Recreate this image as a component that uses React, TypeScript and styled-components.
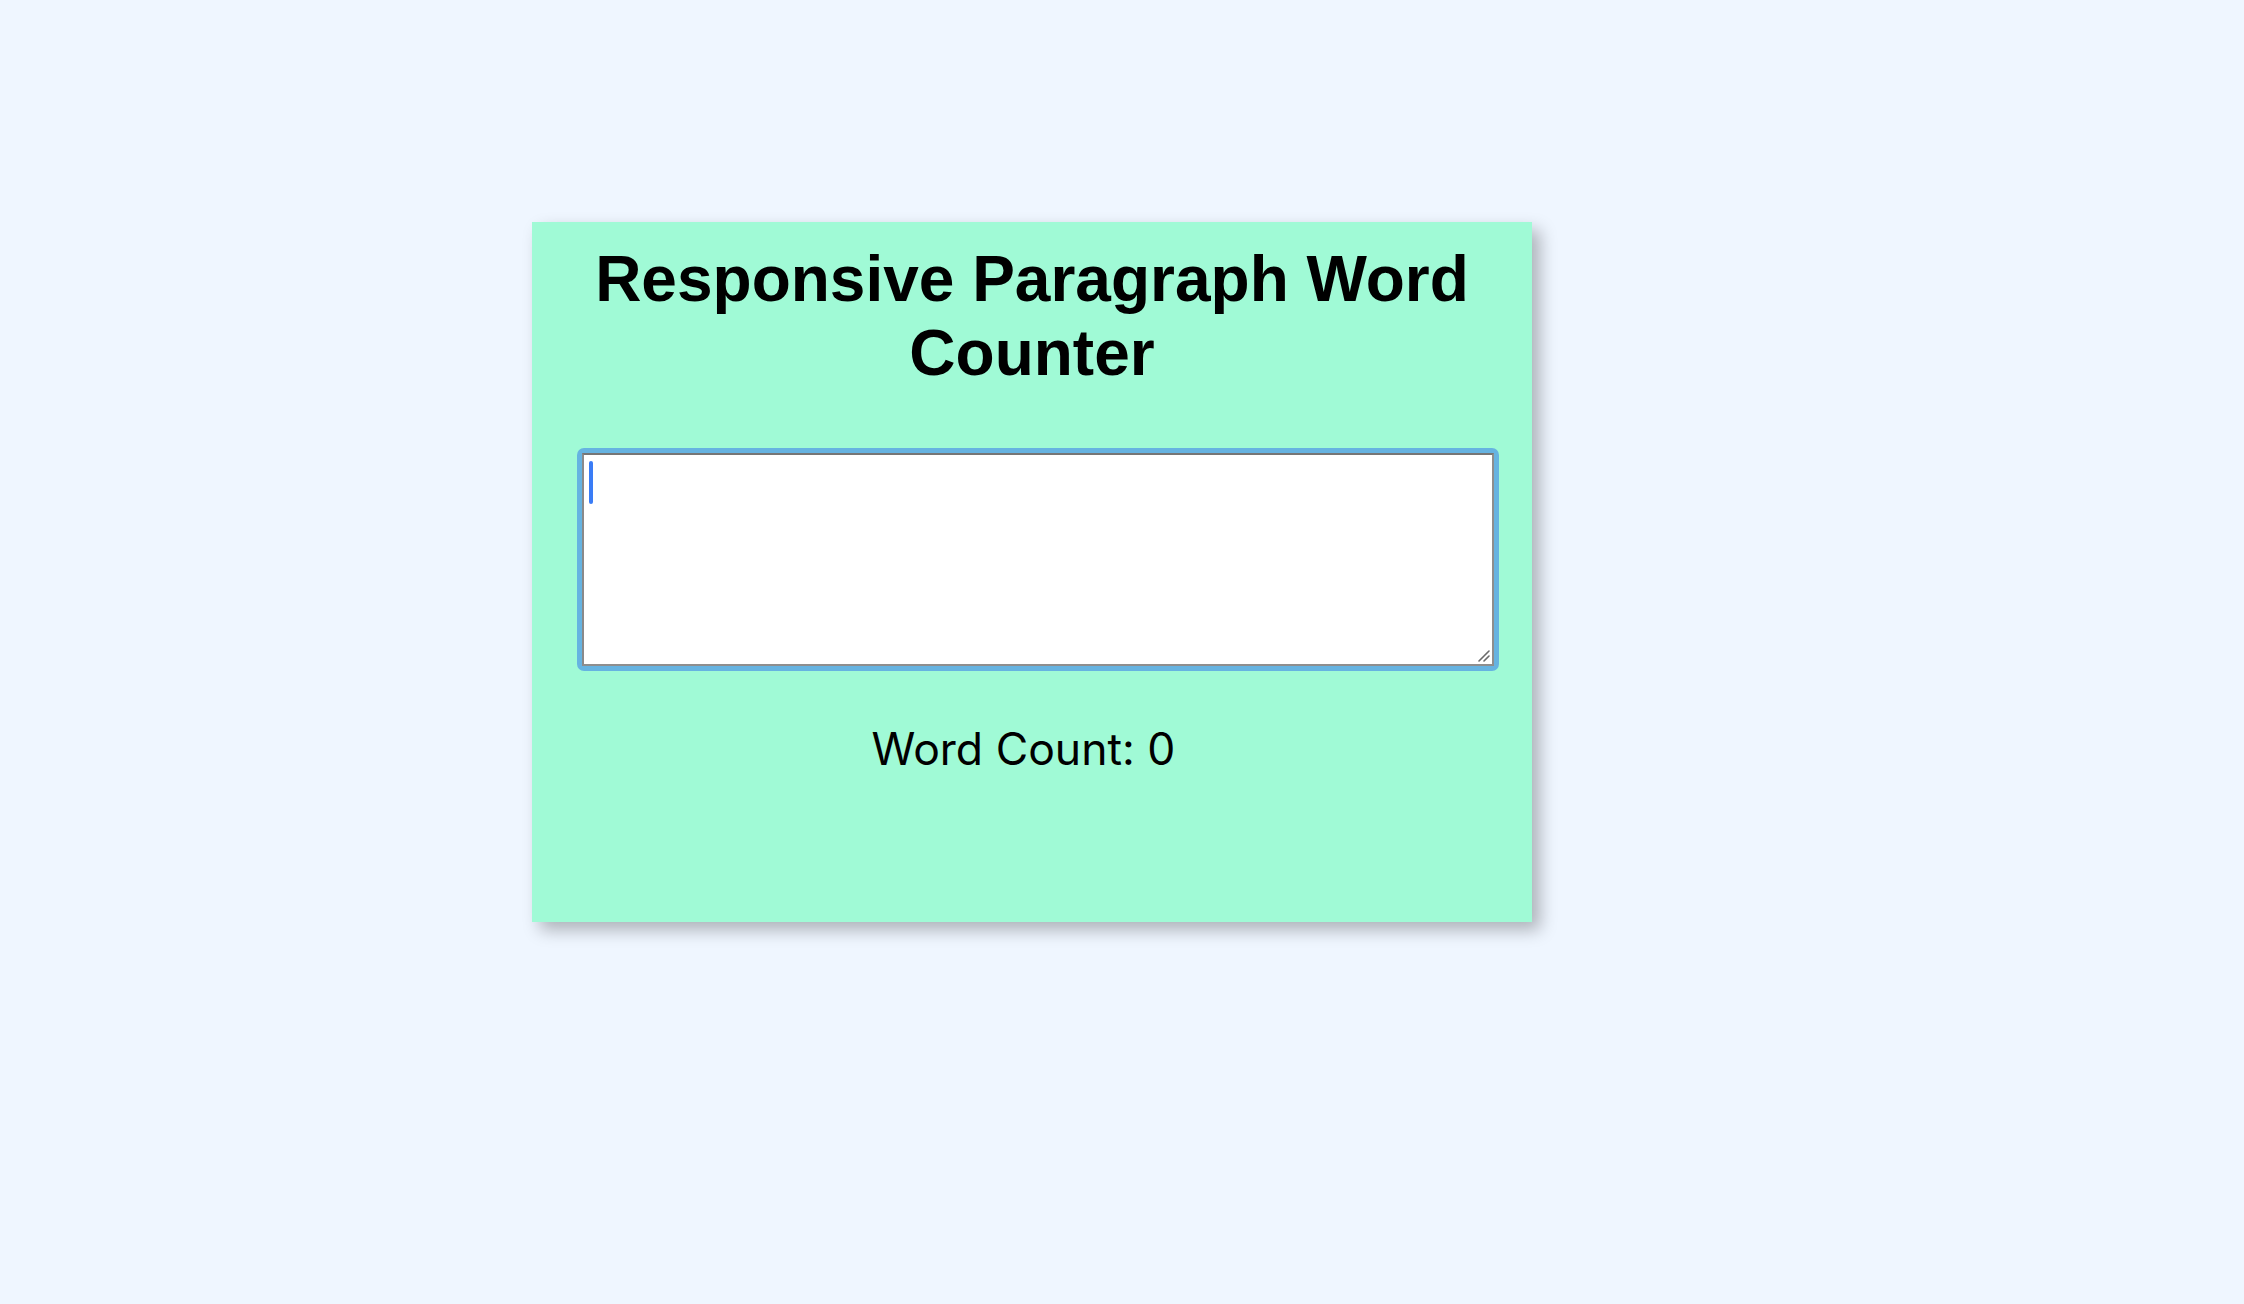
import React, { useState } from "react";
import styled, { createGlobalStyle } from "styled-components";

const GlobalStyle = createGlobalStyle`
  html, body {
    margin: 0;
    padding: 0;
    background: #eff6ff;
  }
  body {
    font-family: "Liberation Sans", Arial, sans-serif;
  }
  * { box-sizing: border-box; }
`;

const Page = styled.main`
  min-height: 1304px;
  padding: 222px 0 0 532px;
  background: #eff6ff;
`;

const Card = styled.section`
  width: 1000px;
  height: 700px;
  padding: 20px;
  background: #a0fad6;
  box-shadow: 8px 8px 16px rgba(0, 0, 0, 0.28);
  display: flex;
  flex-direction: column;
`;

const Title = styled.h1`
  margin: 0;
  font-family: "Liberation Sans", Arial, sans-serif;
  font-weight: 700;
  font-size: 64px;
  line-height: normal;
  text-align: center;
  color: #000;
`;

const FocusRing = styled.div`
  position: relative;
  margin: 58px 0 0 25px;
  width: 922px;
  padding: 5px;
  border-radius: 7px;
  background: #66b3e1;
`;

const TextArea = styled.textarea`
  display: block;
  width: 912px;
  height: 213px;
  margin: 0;
  padding: 4px 6px;
  border-width: 2px;
  border-style: solid;
  border-color: #767676 #8e8e8e #8e8e8e #8a8a8a;
  border-radius: 0;
  background: #fff;
  font-family: "Liberation Sans", Arial, sans-serif;
  font-size: 36px;
  outline: none;
  resize: none;
`;

const Caret = styled.span`
  position: absolute;
  left: 12px;
  top: 13px;
  width: 4px;
  height: 43px;
  border-radius: 2px;
  background: #3a7cf6;
  pointer-events: none;
`;

const Grip = styled.svg`
  position: absolute;
  right: 9px;
  bottom: 9px;
  width: 12px;
  height: 12px;
  pointer-events: none;
`;

const Count = styled.p`
  margin: 51px 0 0 0;
  padding-right: 17px;
  font-family: Inter, "Open Sans", sans-serif;
  font-size: 44.5px;
  font-weight: 400;
  line-height: normal;
  text-align: center;
  color: #000;
`;

export default function App() {
  const [text, setText] = useState("");
  const words = text.trim() === "" ? 0 : text.trim().split(/\s+/).length;
  return (
    <>
      <GlobalStyle />
      <Page>
        <Card>
          <Title>Responsive Paragraph Word Counter</Title>
          <FocusRing>
            <TextArea value={text} onChange={(e) => setText(e.target.value)} />
            {text === "" && <Caret />}
            <Grip viewBox="0 0 12 12">
              <path d="M1 11 L11 1 M6 11 L11 6" stroke="#6b6b6b" strokeWidth="1.6" strokeLinecap="round" />
            </Grip>
          </FocusRing>
          <Count>Word Count: {words}</Count>
        </Card>
      </Page>
    </>
  );
}
